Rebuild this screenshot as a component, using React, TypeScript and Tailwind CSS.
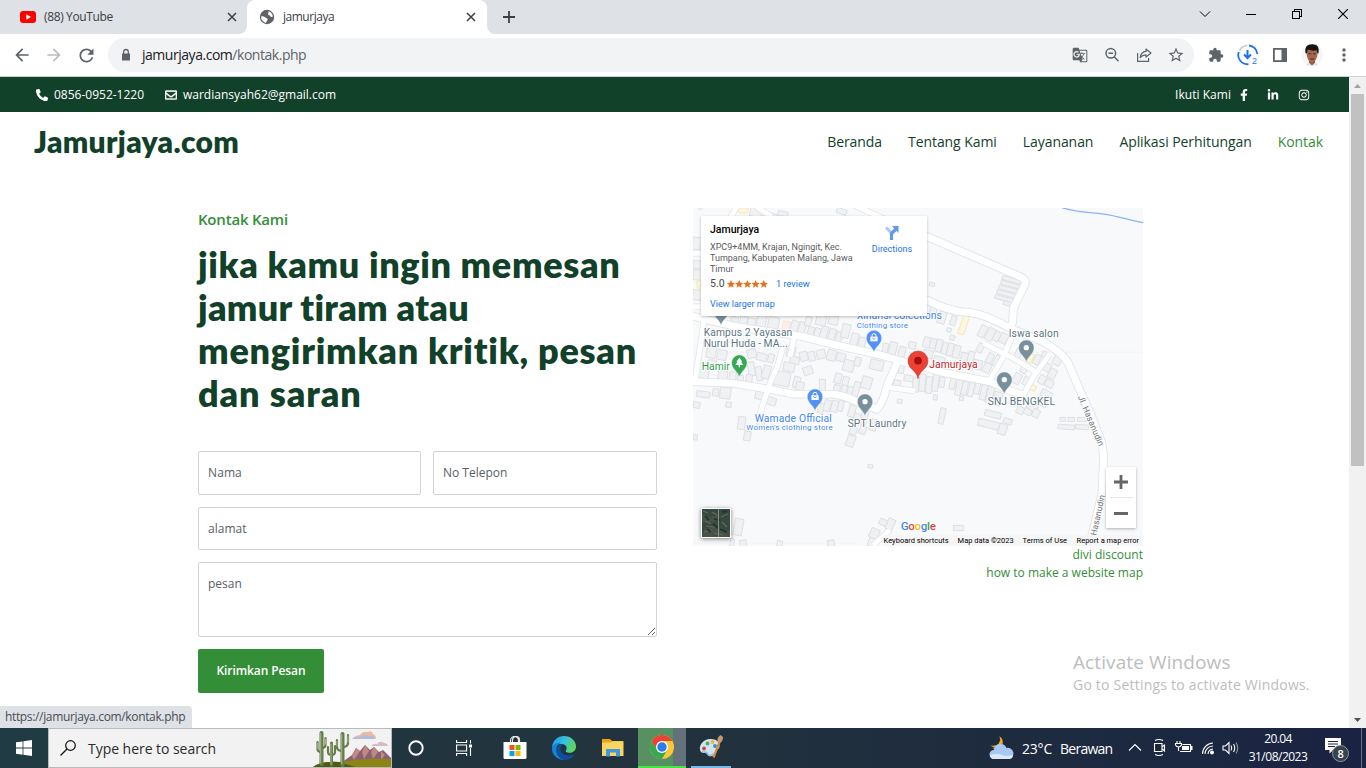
import type { ReactNode } from "react";
import { FaFacebookF, FaInstagram, FaLinkedinIn, FaPhoneAlt, FaRegEnvelope } from "react-icons/fa";
import {
  MdArrowBack,
  MdArrowForward,
  MdExtension,
  MdGTranslate,
  MdMoreVert,
  MdRefresh,
  MdStarBorder,
} from "react-icons/md";

function Cross({ className = "" }: { className?: string }) {
  return (
    <svg viewBox="0 0 10 10" className={`size-[10px] ${className}`} stroke="currentColor" strokeWidth="1.5" fill="none">
      <path d="M1 1l8 8M9 1L1 9" />
    </svg>
  );
}

function TabStrip() {
  return (
    <div className="flex h-[34px] shrink-0 bg-[#dee1e6] text-[12px] text-[#3c4043]">
      <div className="flex w-[247px] items-center pl-5">
        <svg viewBox="0 0 16 12" className="h-[12px] w-[16px]">
          <rect width="16" height="12" rx="3" fill="#f00" />
          <path d="M6.3 3.3v5.4L11 6z" fill="#fff" />
        </svg>
        <span className="ml-2 tracking-[-0.36px]">(88) YouTube</span>
        <Cross className="mr-[10px] ml-auto" />
      </div>
      <div className="relative flex w-[240px] items-center rounded-t-lg bg-white pl-[11px]">
        <svg viewBox="0 0 8 8" className="absolute bottom-0 -left-2 size-2">
          <path d="M8 0v8H0a8 8 0 0 0 8-8z" fill="#fff" />
        </svg>
        <svg viewBox="0 0 8 8" className="absolute -right-2 bottom-0 size-2">
          <path d="M0 0v8h8a8 8 0 0 1-8-8z" fill="#fff" />
        </svg>
        <svg viewBox="0 0 18 18" className="size-[18px]">
          <circle cx="9" cy="9" r="7.200" fill="#5f6368" />
          <path d="M10.500 3.200a6 6 0 0 1 4.300 5.300c-1.200.8-2.300.7-2.600-.5-.3-1-2.200-.6-2.200-2 0-1 .8-1 .5-2.800zM3.200 8.200c2 0 3.600.3 4.300 1.300.6 1 2 .7 2.200 1.700.2 1-1.200 1.300-1.700 3.700a6 6 0 0 1-4.800-6.700z" fill="#fff" />
        </svg>
        <span className="ml-[7px] tracking-[-0.48px]">jamurjaya</span>
        <Cross className="mr-[11px] ml-auto" />
      </div>
      <div className="flex w-11 items-center justify-center">
        <svg viewBox="0 0 12 12" className="size-3" stroke="#3c4043" strokeWidth="1.8">
          <path d="M6 0v12M0 6h12" />
        </svg>
      </div>
      <div className="ml-auto flex h-[28px] items-center text-black">
        <div className="flex w-[46px] justify-center">
          <svg viewBox="0 0 12 8" className="h-2 w-3" fill="none" stroke="currentColor">
            <path d="M1 1.5l5 5 5-5" />
          </svg>
        </div>
        <div className="flex w-[46px] justify-center">
          <div className="h-px w-[10px] bg-black" />
        </div>
        <div className="flex w-[46px] justify-center">
          <svg viewBox="0 0 10 10" className="size-[10px]" fill="none" stroke="currentColor" shapeRendering="crispEdges">
            <path d="M.5 2.5h7v7h-7zM2.5 2.5v-2h7v7h-2" />
          </svg>
        </div>
        <div className="flex w-[46px] justify-center">
          <svg viewBox="0 0 10 10" className="size-[10px]" stroke="currentColor" strokeWidth="1.1">
            <path d="M0 0l10 10M10 0L0 10" />
          </svg>
        </div>
      </div>
    </div>
  );
}

function Cell({ children }: { children: ReactNode }) {
  return <div className="flex w-8 items-center justify-center text-[#5f6368]">{children}</div>;
}

function Toolbar() {
  return (
    <div className="flex h-[43px] shrink-0 items-center border-b border-[#d0d3d6] bg-white pl-[6px]">
      <Cell><MdArrowBack className="size-5" /></Cell>
      <Cell><MdArrowForward className="size-5 text-[#babcbe]" /></Cell>
      <Cell><MdRefresh className="size-[21px]" /></Cell>
      <div className="ml-[6px] flex h-[34px] w-[1086px] items-center rounded-full bg-[#f1f3f4] pl-[11px]">
        <svg viewBox="0 0 14 14" className="size-[14px]">
          <path d="M3 5.500h8v7H3z" fill="#5f6368" />
          <path d="M4.700 6V3.800a2.300 2.300 0 0 1 4.600 0V6" fill="none" stroke="#5f6368" strokeWidth="1.300" />
        </svg>
        <span className="ml-[9px] pb-px text-[14px] tracking-[-0.47px] text-[#202124]">
          jamurjaya.com<span className="text-[#5f6368]">/kontak.php</span>
        </span>
        <div className="mr-[2px] ml-auto flex">
          <Cell><MdGTranslate className="size-4" /></Cell>
          <Cell>
            <svg viewBox="0 0 16 16" className="size-4" fill="none" stroke="currentColor" strokeWidth="1.500">
              <circle cx="6.800" cy="6.300" r="4.800" />
              <path d="M10.200 9.800l4.300 4.400M4.500 6.300h4.600" />
            </svg>
          </Cell>
          <Cell>
            <svg viewBox="0 0 16 16" className="size-4" fill="none" stroke="currentColor" strokeWidth="1.200">
              <path d="M1.600 6v8.400h11V11" />
              <path d="M10 2l5 4-5 4V7.800C7.500 7.700 5.700 8.600 4.200 10.600 4.600 7 6.700 4.700 10 4.400z" strokeLinejoin="round" />
            </svg>
          </Cell>
          <Cell><MdStarBorder className="size-[18px]" /></Cell>
        </div>
      </div>
      <div className="ml-[6px] flex items-center">
        <Cell><MdExtension className="size-4" /></Cell>
        <Cell>
          <svg viewBox="0 0 22 22" className="size-[22px]" fill="none">
            <path d="M2.500 6.500A9.200 9.200 0 0 1 10.500 1.500" stroke="#c6c9cd" strokeWidth="1.700" />
            <path d="M12 1.500A9.200 9.200 0 0 1 20.300 10M1.800 8A9.200 9.200 0 0 0 11.500 20.200" stroke="#1a73e8" strokeWidth="1.800" />
            <path d="M10.500 6v8M7 10.500l3.500 3.500 3.500-3.500" stroke="#1a73e8" strokeWidth="2" />
            <text x="15" y="20" fontSize="9" fill="#1a73e8" fontFamily="Liberation Sans">2</text>
          </svg>
        </Cell>
        <Cell>
          <svg viewBox="0 0 14 14" className="size-[14px]">
            <path d="M0 0h14v14H0z" fill="#5f6368" />
            <path d="M1.800 1.800h6.700v10.400H1.800z" fill="#fff" />
          </svg>
        </Cell>
        <Cell>
          <svg viewBox="0 0 22 22" className="size-[22px]">
            <circle cx="11" cy="11" r="10.800" fill="#f4f7f5" />
            <path d="M4.500 21.500c1-2 3.500-3 6.500-3s5.500 1 6.500 3z" fill="#dfe3e5" />
            <path d="M8 15h6v3.500L11 21.500 8 18.500z" fill="#96593f" />
            <path d="M5.800 7.500Q6 4 11 4t5.400 3.500q.6 5-1.400 8-1.500 3-4 3t-4-3q-1.800-3-1.200-8z" fill="#a5674c" />
            <path d="M4.700 9.500C3.200 3.500 6 .3 11.200.3S18.800 3 17.300 9.800l-1-.5-.6-3C12.500 7 9.500 6.500 6.800 5.500l-1 4z" fill="#171313" />
            <path d="M7.500 9.800h2.700M12 9.800h2.700M9.200 15h3.800" stroke="#4c241c" />
          </svg>
        </Cell>
        <Cell><MdMoreVert className="size-[20px]" /></Cell>
      </div>
    </div>
  );
}

function SiteHeader() {
  return (
    <>
      <div className="flex h-[35px] shrink-0 items-center bg-[#12412a] pr-[39px] pl-9 text-[12px] text-white">
        <FaPhoneAlt className="size-3" />
        <span className="ml-[6px] w-[111px]">0856-0952-1220</span>
        <FaRegEnvelope className="size-3" stroke="currentColor" strokeWidth="18" />
        <span className="ml-[6px]">wardiansyah62@gmail.com</span>
        <span className="ml-auto tracking-[0.03px]">Ikuti Kami</span>
        <FaFacebookF className="ml-[7px] size-3" />
        <FaLinkedinIn className="ml-[17px] size-3" />
        <FaInstagram className="ml-[19px] size-3" />
      </div>
      <div className="flex h-[60px] shrink-0 items-center pr-[26px] pb-[2px] pl-[34px] text-[#12412a]">
        <span className="font-['Lato'] text-[30px] font-extrabold tracking-[0.33px]">Jamurjaya.com</span>
        <nav className="ml-auto flex gap-[26px] text-[14px] tracking-[-0.07px]">
          <span>Beranda</span>
          <span>Tentang Kami</span>
          <span>Layananan</span>
          <span>Aplikasi Perhitungan</span>
          <span className="text-[#348e38]">Kontak</span>
        </nav>
      </div>
    </>
  );
}

function ContactForm() {
  return (
    <div className="w-[459px]">
      <p className="h-[22px] text-[15px] leading-[22px] font-semibold tracking-[-0.2px] text-[#348e38]">Kontak Kami</p>
      <h1 className="mt-[13px] font-['Lato'] text-[36px] leading-[43px] font-extrabold whitespace-nowrap text-[#12412a]">
        <span className="tracking-[0.64px]">jika kamu ingin memesan</span><br />
        <span className="tracking-[0.27px]">jamur tiram atau</span><br />
        <span className="tracking-[0.75px]">mengirimkan kritik, pesan</span><br />
        <span className="tracking-[0.9px]">dan saran</span>
      </h1>
      <form className="mt-9 flex flex-col gap-3 text-[12px] text-[#212529]">
        <div className="flex justify-between">
          <input placeholder="Nama" className="h-[44px] w-[223px] rounded-[2px] border border-[#ced4da] px-[9px] pb-px tracking-[0.1px] placeholder:text-[#596066]" />
          <input placeholder="No Telepon" className="h-[44px] w-[224px] rounded-[2px] border border-[#ced4da] px-[9px] pb-px placeholder:text-[#596066]" />
        </div>
        <input placeholder="alamat" className="h-[43px] rounded-[2px] border border-[#ced4da] px-[9px] tracking-[0.03px] placeholder:text-[#596066]" />
        <textarea placeholder="pesan" className="h-[75px] rounded-[2px] border border-[#ced4da] px-[9px] py-3 leading-[18px] placeholder:text-[#596066]" />
        <button type="button" className="h-[44px] w-[126px] rounded-[2px] bg-[#348e38] font-[550] tracking-[-0.09px] text-white">
          Kirimkan Pesan
        </button>
      </form>
    </div>
  );
}

const roads = [
  "M0 346L60 362L150 382L330 408L450 438L560 462L640 485L760 518L900 545L960 572L1000 585",
  "M680 290L710 300Q780 335 830 337T960 385L1060 425Q1120 460 1135 490L1165 560L1205 650L1232 720Q1242 750 1240 790L1236 880L1200 1030",
  "M0 545L130 550L240 568L310 582L430 583Q470 588 500 605L560 628Q580 610 590 560L625 480",
  "M700 105L990 230Q1012 238 1004 255L970 325L968 365L960 390",
];
const lanes = [
  "M15 545L42 362",
  "M208 645L240 550L262 500L282 430",
  "M900 540L940 470L970 400",
  "M880 430L960 470L1045 520",
  "M1000 585L1030 530L1080 462",
  "M600 563L675 573",
  "M140 20L120 55",
  "M470 5L600 65L690 100",
  "M200 20L245 50",
  "M0 160H40M0 320H40",
  "M550 1035L600 990",
  "M315 400L300 470",
];
/* x, y, width, height, rotation */
const buildings: number[][] = [
  [20, 5, 40, 12, -50], [180, 25, 34, 26, 15], [220, 38, 40, 18, 20], [264, 34, 30, 14, 12], [440, 26, 30, 16, 20], [8, 112, 26, 36, 5], [8, 182, 26, 24, 5], [10, 210, 26, 30, 5], [8, 270, 26, 30, 8],
  [50, 330, 26, 22, 15], [122, 350, 22, 22, 12], [150, 350, 22, 24, 12], [172, 355, 24, 30, 12], [200, 345, 28, 40, 12], [234, 352, 32, 40, 12], [302, 362, 22, 40, 18], [326, 366, 20, 38, 18], [346, 350, 18, 28, 18], [352, 380, 18, 36, 18], [372, 384, 18, 34, 18], [392, 378, 20, 40, 18], [416, 386, 20, 34, 18], [438, 396, 18, 32, 18], [378, 346, 30, 30, 12], [416, 348, 28, 26, 12], [455, 372, 24, 42, 14], [482, 400, 22, 38, 14], [506, 412, 20, 32, 14], [578, 430, 16, 28, 14], [598, 426, 22, 38, 14], [626, 440, 20, 30, 14],
  [50, 440, 28, 34, 12], [82, 450, 28, 30, 12], [172, 448, 26, 26, -12], [200, 460, 30, 22, 15], [234, 462, 18, 26, 15], [174, 486, 20, 42, -10], [198, 500, 18, 42, -10], [218, 496, 22, 40, 15], [290, 440, 26, 30, 12], [300, 470, 28, 22, 12], [280, 488, 34, 26, 12], [252, 515, 48, 42, 10], [310, 530, 20, 34, 15], [330, 455, 22, 28, -14], [355, 455, 20, 28, -14], [380, 450, 26, 26, -14], [412, 450, 26, 32, 14], [440, 460, 26, 24, 14], [460, 480, 32, 34, 15], [494, 472, 18, 26, 15], [540, 480, 40, 30, 14], [340, 500, 28, 24, -20], [318, 546, 24, 24, 12], [388, 538, 18, 34, 0], [434, 520, 20, 30, 15], [458, 530, 18, 28, 15], [430, 555, 20, 26, 15], [454, 556, 16, 28, 15], [472, 560, 18, 30, 15], [490, 545, 18, 44, 15], [515, 530, 30, 36, 15],
  [24, 505, 32, 30, 6], [55, 480, 24, 22, 6], [84, 512, 28, 34, 6], [118, 516, 20, 30, 6], [142, 526, 18, 22, 6], [168, 524, 18, 28, 6],
  [20, 574, 40, 18, 8], [10, 606, 20, 18, 8], [68, 566, 18, 22, 8], [90, 562, 32, 34, 8], [108, 606, 16, 16, 8], [10, 704, 12, 16, 8], [196, 568, 28, 30, 10], [224, 592, 34, 22, 15], [144, 650, 22, 38, 8], [162, 694, 20, 28, 8], [200, 655, 24, 24, 8],
  [384, 610, 18, 30, 15], [402, 600, 20, 34, 15], [424, 602, 20, 34, 15], [444, 602, 16, 32, 15], [476, 615, 20, 36, 15], [490, 640, 20, 34, 15], [512, 634, 20, 40, 15], [540, 658, 20, 34, 15], [470, 706, 24, 34, 20], [480, 680, 20, 24, 20], [508, 678, 20, 24, 20],
  [610, 540, 22, 20, 8], [626, 492, 16, 28, 8], [642, 526, 28, 18, 8], [622, 598, 14, 12, 8], [668, 532, 18, 44, 5], [688, 522, 18, 52, 5], [708, 530, 18, 50, 5], [728, 520, 18, 54, 8], [748, 532, 16, 30, 8], [730, 584, 12, 16, 8], [780, 528, 16, 40, 12], [798, 536, 18, 50, 12], [816, 544, 16, 42, 12], [836, 546, 16, 44, 14], [854, 544, 16, 38, 14], [872, 552, 18, 48, 14], [890, 560, 20, 48, 14], [910, 576, 24, 40, 20], [808, 590, 12, 12, 10],
  [656, 426, 22, 20, 8], [700, 412, 22, 30, 14], [720, 416, 18, 30, 14], [738, 418, 18, 38, 14], [756, 428, 16, 34, 14], [772, 430, 18, 38, 14], [790, 436, 20, 38, 14], [812, 458, 22, 30, 14], [834, 454, 18, 34, 14], [848, 480, 28, 28, 14], [700, 450, 28, 24, 14], [730, 470, 34, 28, 14], [720, 320, 20, 24, 14], [745, 335, 22, 36, 18], [782, 348, 16, 28, 18], [770, 384, 14, 12, 18], [780, 406, 14, 14, 18], [868, 376, 20, 36, 28], [890, 384, 22, 38, 28], [912, 394, 18, 30, 28], [930, 400, 22, 30, 28], [862, 430, 18, 28, 28], [890, 460, 18, 34, 28], [912, 466, 18, 34, 28], [880, 490, 22, 28, 28], [718, 248, 16, 10, 15],
  [936, 234, 60, 12, 15], [932, 248, 60, 12, 15], [926, 262, 60, 12, 15], [920, 276, 60, 12, 15], [914, 290, 56, 12, 15], [940, 306, 34, 12, 15],
  [976, 446, 18, 28, 28], [994, 492, 18, 28, 28], [970, 520, 22, 32, 28], [1000, 530, 16, 26, 28], [1056, 454, 16, 18, 28], [1032, 464, 18, 30, 28], [1060, 490, 22, 24, 28], [1090, 466, 24, 30, 28], [1076, 506, 22, 30, 28], [1046, 526, 20, 26, 28], [1066, 540, 24, 22, 28], [1052, 572, 34, 22, 28], [1040, 596, 32, 22, 28], [1010, 610, 32, 26, 28], [970, 590, 22, 26, 28], [980, 620, 22, 22, 28], [1002, 626, 22, 18, 28], [1028, 628, 20, 24, 28],
  [748, 624, 16, 48, 12], [884, 634, 50, 18, 14], [864, 662, 66, 22, 14], [926, 672, 24, 32, 18], [940, 656, 26, 16, 18], [1110, 652, 16, 12, 0], [1134, 652, 20, 12, 0], [1162, 652, 28, 12, 0], [1104, 674, 50, 14, 4], [1156, 674, 40, 14, 4],
  [534, 794, 14, 10, 6], [790, 976, 30, 16, 0], [132, 956, 26, 50, 10], [120, 1016, 12, 30, 10], [150, 1020, 20, 24, -10], [260, 1022, 16, 30, 10], [414, 1020, 20, 30, -10], [568, 958, 24, 18, 25], [590, 956, 22, 34, 25], [540, 986, 26, 30, 25], [535, 1014, 22, 26, 20],
];

function Pin({ x, y, fill, icon }: { x: number; y: number; fill: string; icon?: "bag" | "tree" }) {
  return (
    <g transform={`translate(${x} ${y})`}>
      <path d="M0 66C-3 50-23 42-23 23a23 23 0 0 1 46 0C23 42 3 50 0 66z" fill={fill} stroke="#fff" strokeOpacity=".6" strokeWidth="1.500" />
      {icon === "bag" ? (
        <>
          <path d="M-11 19h22v14h-22z" fill="#fff" />
          <path d="M-6 21v-5a6 6 0 0 1 12 0v5" fill="none" stroke="#fff" strokeWidth="3" />
          <path d="M-5 23q5 7 10 0" fill="none" stroke={fill} strokeWidth="2.500" />
        </>
      ) : icon === "tree" ? (
        <path d="M0 8L9 20H5l7 10H2v7h-4v-7h-10l7-10h-4z" fill="#fff" />
      ) : (
        <circle cy="23" r="8" fill="#fff" />
      )}
    </g>
  );
}

function Label({ x, y, w, size = 31, fill = "#5d7582", children }: { x: number; y: number; w: number; size?: number; fill?: string; children: string }) {
  return (
    <text x={x} y={y} textLength={w} fontSize={size} fill={fill} stroke="#fff" strokeWidth="5" strokeLinejoin="round" paintOrder="stroke" fontWeight="400">
      {children}
    </text>
  );
}

function MapDrawing() {
  return (
    <svg viewBox="9 24 1350 1014" className="absolute inset-0 h-[338px] w-[450px] font-['Roboto']">
      <rect x="9" y="24" width="1350" height="1014" fill="#f8f9fa" />
      <path d="M9 457H1359M9 1030H500" stroke="#f1f2f5" strokeWidth="2" />
      <g fill="#eff1f3" stroke="#dadde1" strokeWidth="2.500">
        {buildings.map(([x, y, w, h, r], i) => (
          <rect key={i} x={x} y={y} width={w} height={h} transform={`rotate(${r} ${x + w / 2} ${y + h / 2})`} />
        ))}
      </g>
      <g fill="#fdf6e0" stroke="#f7e3a9" strokeWidth="2.500">
        <path d="M822 343L839 348L821 404L803 400z" />
        <path d="M1018 550L1040 560L1034 574L1012 566z" />
        <path d="M1018 458L1034 465L1022 490L1008 484z" />
        <path d="M144 24H176L170 40L142 36zM20 244L32 240V268L22 266zM378 606L396 602L384 636z" />
        <path d="M280 362L302 366L296 392L276 388z" fill="#fbeee4" stroke="#f6e3d6" />
      </g>
      <g fill="none" strokeLinejoin="round">
        <g stroke="#dfe2e6">
          {lanes.map((d) => <path key={d} d={d} strokeWidth="19" />)}
          {roads.map((d) => <path key={d} d={d} strokeWidth="26" />)}
        </g>
        <g stroke="#fff">
          {lanes.map((d) => <path key={d} d={d} strokeWidth="15" />)}
          {roads.map((d) => <path key={d} d={d} strokeWidth="21" />)}
        </g>
      </g>
      <path d="M1116 23Q1150 34 1200 38T1290 52T1359 68" fill="none" stroke="#8ab4f8" strokeWidth="4" />
      <Pin x={93} y={310} fill="#78909c" />
      <Pin x={148} y={465} fill="#34a853" icon="tree" />
      <Pin x={552} y={391} fill="#5491f5" icon="bag" />
      <Pin x={375} y={567} fill="#5491f5" icon="bag" />
      <Pin x={525} y={582} fill="#78909c" />
      <Pin x={943} y={516} fill="#78909c" />
      <Pin x={1009} y={420} fill="#78909c" />
      <path d="M684 536C680 511 654 507 654 483a30 30 0 0 1 60 0C714 507 688 511 684 536z" fill="#ea4335" stroke="#c5221f" strokeWidth="1.500" />
      <circle cx="684" cy="482" r="11.500" fill="#a50e0e" />
      <Label x={41} y={409} w={266}>Kampus 2 Yayasan</Label>
      <Label x={41} y={441} w={252}>Nurul Huda - MA...</Label>
      <Label x={35} y={510} w={84} size={31} fill="#2e9b4c">Hamir</Label>
      <Label x={500} y={358} w={256} size={32} fill="#4285f4">Xinansi colections</Label>
      <Label x={500} y={384} w={154} size={24} fill="#4285f4">Clothing store</Label>
      <Label x={718} y={503} w={145} size={31} fill="#c5221f">Jamurjaya</Label>
      <Label x={956} y={411} w={150}>Iswa salon</Label>
      <Label x={893} y={614} w={202}>SNJ BENGKEL</Label>
      <Label x={194} y={665} w={231} size={31} fill="#4285f4">Wamade Official</Label>
      <Label x={169} y={691} w={259} size={24} fill="#4285f4">Women's clothing store</Label>
      <Label x={473} y={681} w={176}>SPT Laundry</Label>
      <g transform="translate(1163 591) rotate(67)"><Label x={0} y={0} w={162} size={26} fill="#6a7075">Jl. Hasanudin</Label></g>
      <g transform="translate(1219 1008) rotate(-78)"><Label x={0} y={0} w={124} size={26} fill="#6a7075">Hasanudin</Label></g>
      <text x="632" y="989" fontSize="35" textLength="106" fontWeight="500" stroke="#fff" strokeWidth="4" paintOrder="stroke">
        <tspan fill="#4285f4">G</tspan><tspan fill="#ea4335">o</tspan><tspan fill="#fbbc04">o</tspan><tspan fill="#4285f4">g</tspan><tspan fill="#34a853">l</tspan><tspan fill="#ea4335">e</tspan>
      </text>
    </svg>
  );
}

function MapPanel() {
  return (
    <div className="w-[450px]">
      <div className="relative h-[338px] overflow-hidden font-['Roboto']">
        <MapDrawing />
        <div className="absolute top-2 left-2 flex h-[100px] w-[226px] rounded-[1px] bg-white pt-[7px] pl-[9px] text-[9px] shadow-[0_1px_3px_rgba(0,0,0,0.25)]">
          <div className="w-[151px] whitespace-nowrap">
            <div className="text-[10.5px] leading-[14px] font-medium text-black">Jamurjaya</div>
            <div className="mt-[5px] leading-[11px] text-[#5b5b5b]">
              XPC9+4MM, Krajan, Ngingit, Kec.<br />Tumpang, Kabupaten Malang, Jawa<br />Timur
            </div>
            <div className="mt-[2px] flex h-[14px] items-center">
              <span className="w-[17px] text-[10.5px] text-[#4a4a4a]">5.0</span>
              <svg viewBox="0 0 41 8" className="h-2 w-[41px]" fill="#e7711b">
                {[0, 1, 2, 3, 4].map((i) => (
                  <path key={i} transform={`translate(${i * 8.2} 0)`} d="M4 0l1.200 2.800 2.900.2-2.200 1.900.7 2.900L4 6.200 1.400 7.800l.7-2.900L-.1 3l2.900-.2z" />
                ))}
              </svg>
              <span className="ml-2 text-[9.2px] text-[#1a73e8]">1 review</span>
            </div>
            <div className="mt-[6px] text-[9px] leading-[14px] text-[#1a73e8]">View larger map</div>
          </div>
          <div className="flex w-[62px] flex-col items-center pt-[2px]">
            <svg viewBox="0 0 14 15" className="h-[15px] w-[14px]" fill="none">
              <path d="M1 2.500L7 8.500" stroke="#a8c7fa" strokeWidth="3" />
              <path d="M6.500 15V8.500L12 3" stroke="#5f9bea" strokeWidth="3.200" />
              <path d="M7 1h6.500v7z" fill="#5f9bea" />
            </svg>
            <span className="mt-[2px] text-[9px] leading-[14px] text-[#1a73e8]">Directions</span>
          </div>
        </div>
        <div className="absolute bottom-2 left-2 size-[30px] border border-white shadow-[0_1px_4px_rgba(0,0,0,0.5)]">
          <svg viewBox="0 0 28 28" className="size-7">
            <path d="M0 0h28v28H0z" fill="#344a41" />
            <path d="M0 5l8 3 8-2v6l-8 2-8-1zM2 20l12-3 14 5v6H0z" fill="#485146" />
            <path d="M1 2l5 2M10 3l5 3M19 8l7-3M3 12l6 3M20 13l5 5M2 23l8-2M12 24l9 2M4 17l9 1" stroke="#6c6556" strokeWidth="1.200" />
            <path d="M3 7l4 4M12 10l6 1M20 3l5-1M5 20l4 3M18 20l7 3M11 15l5 4" stroke="#20382f" strokeWidth="2" />
            <path d="M16.500 0v28" stroke="#8a8d82" />
          </svg>
        </div>
        <div className="absolute right-[7px] bottom-[18px] flex h-[61px] w-[30px] flex-col items-center rounded-[1px] bg-white shadow-[0_1px_3px_rgba(0,0,0,0.3)]">
          <div className="flex h-[30px] items-center">
            <svg viewBox="0 0 14 14" className="size-[14px]" stroke="#666" strokeWidth="2.800"><path d="M7 0v14M0 7h14" /></svg>
          </div>
          <div className="h-px w-[23px] bg-[#e6e6e6]" />
          <div className="flex h-[30px] items-center">
            <div className="h-[3px] w-[14px] bg-[#666]" />
          </div>
        </div>
        <div className="absolute right-0 bottom-0 flex h-[11px] items-center bg-[#f5f5f5]/80 pr-1 text-[7.5px] whitespace-nowrap text-black">
          <span className="w-[74px]">Keyboard shortcuts</span>
          <span className="w-[65px]">Map data ©2023</span>
          <span className="w-[54px]">Terms of Use</span>
          <span className="tracking-[-0.01px]">Report a map error</span>
        </div>
      </div>
      <div className="text-right text-[12px] leading-[18px] text-[#348e38]">
        <div>divi discount</div>
        <div>how to make a website map</div>
      </div>
    </div>
  );
}

function Scrollbar() {
  return (
    <div className="flex w-[17px] shrink-0 flex-col items-center bg-[#f1f1f1]">
      <svg viewBox="0 0 17 17" className="size-[17px]"><path d="M5 11h7L8.500 7z" fill="#a3a3a3" /></svg>
      <div className="h-[372px] w-[13px] bg-[#c1c1c1]" />
      <svg viewBox="0 0 17 17" className="mt-auto size-[17px]"><path d="M5 7h7l-3.500 4z" fill="#505050" /></svg>
    </div>
  );
}

function DesertArt() {
  return (
    <svg viewBox="0 0 78 38" className="h-[38px] w-[78px]">
      <path d="M40 9q3-3 7-3 3-4 8-3 4-2 5 2 3 1 3 4z" fill="#e9bba5" />
      <path d="M39 10q3-3 8-2 5-3 9-1 4-1 7 3z" fill="#b3b9d6" />
      <path d="M58 17q3-3 6-2 3-4 7-1 3 0 4 3z" fill="#d5b9c4" />
      <path d="M28 34l11-8 4-7 4 3 5-6 5 5 4-3 5 5 4-2 8 8v7z" fill="#8a6076" />
      <path d="M43 19l4 3-6 9-2-4zM52 16l4 6-5 8-2-7zM61 18l4 5-5 7-2-7zM68 22l4 4-4 5z" fill="#c18a80" />
      <path d="M0 38q8-6 26-5 26-5 52-3v8z" fill="#8c8414" />
      <path d="M0 38q8-6 26-5l16 5z" fill="#4d5c14" />
      <g fill="none" strokeLinecap="round">
        <g stroke="#647c4a">
          <path d="M8.500 35V4M29.500 36V5" strokeWidth="4" />
          <path d="M18.500 36V14" strokeWidth="3" />
          <path d="M4.500 13v7q0 3 4 3M12.500 9v7q0 3-4 3M22 17v6q0 3-3.500 3M15 18v5q0 3 3.500 3M24 11v7q0 4 5.500 4M35 6v8q0 4-5.500 4" strokeWidth="2.200" />
        </g>
        <path d="M7.700 34V4.500M28.700 35V5.500M18 35V15M24 12v5M35 7v6M4.200 14v5M12.500 10v5" stroke="#a9b589" strokeWidth="1.100" />
      </g>
    </svg>
  );
}

function Taskbar() {
  return (
    <div className="flex h-10 shrink-0 items-center bg-linear-to-r from-[#203b43] via-[#22323c] to-[#1a2342] text-white">
      <div className="flex w-12 justify-center">
        <svg viewBox="0 0 16 16" className="size-4" fill="#fff">
          <path d="M0 2.300L6.600 1.400v6.200H0zM7.400 1.300L16 0v7.600H7.400zM0 8.400h6.600v6.300L0 13.700zM7.400 8.400H16V16l-8.600-1.200z" />
        </svg>
      </div>
      <div className="flex h-10 w-[344px] items-center border border-[#b8babb] bg-[#f2f2f2] pl-[11px]">
        <svg viewBox="0 0 16 16" className="size-4" fill="none" stroke="#111" strokeWidth="1.200">
          <circle cx="10.500" cy="5.500" r="4.800" />
          <path d="M7 9L.5 15.500" />
        </svg>
        <span className="ml-3 text-[14px] tracking-[-0.04px] text-[#2b2b2b]">Type here to search</span>
        <div className="ml-auto"><DesertArt /></div>
      </div>
      <div className="flex h-10">
        <div className="flex w-12 items-center justify-center">
          <svg viewBox="0 0 16 16" className="size-4" fill="none" stroke="#fff" strokeWidth="1.900"><circle cx="8" cy="8" r="6.700" /></svg>
        </div>
        <div className="flex w-12 items-center justify-center">
          <svg viewBox="0 0 16 16" className="size-4" fill="none" stroke="#fff" strokeWidth="1.100">
            <path d="M.6 0v2.500h10V0M.6 5h10v6H.6zM.6 16v-2.500h10V16M14.500 0v3.500M14.500 8v8" />
            <path d="M13 4.500h3v3h-3z" fill="#fff" stroke="none" />
          </svg>
        </div>
        <div className="flex w-[53px] items-center justify-center">
          <svg viewBox="0 0 24 24" className="size-6">
            <path d="M7.500 6V4.500a3.500 3.500 0 0 1 8 0V6M9.500 6V4a3.500 3.500 0 0 1 7 0v2" fill="none" stroke="#e8e8e8" strokeWidth="1.200" />
            <path d="M.5 6h23v15.500a1.500 1.500 0 0 1-1.500 1.500H2a1.500 1.500 0 0 1-1.500-1.500z" fill="#fff" />
            <path d="M6.500 9h5v5h-5z" fill="#f25022" /><path d="M12.500 9h5v5h-5z" fill="#7fba00" />
            <path d="M6.500 15h5v5h-5z" fill="#00a4ef" /><path d="M12.500 15h5v5h-5z" fill="#ffb900" />
          </svg>
        </div>
        <div className="flex w-[46px] items-center justify-center">
          <svg viewBox="0 0 24 24" className="size-6">
            <defs>
              <linearGradient id="edgeTop" x1="0" y1=".2" x2="1" y2=".5"><stop stopColor="#1d9be8" /><stop offset=".5" stopColor="#35c1df" /><stop offset="1" stopColor="#5fd859" /></linearGradient>
            </defs>
            <path d="M0 11.500C.5 4.500 5.500 0 12 0c7 0 12 5 12 10.500 0 4-3 6.300-6.500 6.300-3 0-4.500-1-3.500-2.500 2-3-.5-6.300-4.500-6.300C5 8 1 9 0 11.500z" fill="url(#edgeTop)" />
            <path d="M0 12c1-4 5-5.500 9-5.300-3.500 1.500-5 4.500-4.500 8C5 19.500 9 23.500 13.500 23.900 5.500 24.700-.3 19 0 12z" fill="#1284d8" />
            <path d="M9.500 8C6 9.500 4 12 4.500 15.500 5.300 20.500 9.500 24 14 24c3.800-.4 6.800-2.500 8.500-5.700-6 3-14 .5-14-5.300 0-2 .7-3.700 2.500-4.700z" fill="#0d4f9e" />
          </svg>
        </div>
        <div className="flex w-[51px] items-center justify-center">
          <svg viewBox="0 0 22 18" className="h-[18px] w-[22px]">
            <path d="M0 0h8l2 2h11v4H0z" fill="#e6a416" />
            <path d="M0 3.500h9l1.500-1.300H21.500V17H0z" fill="#fcd462" />
            <path d="M4 17.500V10h14v7.500h-4v-4H8v4z" fill="#3f99dc" />
          </svg>
        </div>
        <div className="flex w-12 items-center justify-center border-b-2 border-[#49e342] bg-linear-to-r from-[#579061] from-73% to-[#63717b] to-73%">
          <svg viewBox="0 0 24 24" className="size-6">
            <circle cx="12" cy="12" r="12" fill="#fcc934" />
            <path d="M1.600 6A12 12 0 0 1 22.400 6H12L6.800 15z" fill="#ea4335" />
            <path d="M1.600 6A12 12 0 0 0 12 24l5.200-9L12 12l-5.200 3z" fill="#34a853" />
            <circle cx="12" cy="12" r="6" fill="#fff" /><circle cx="12" cy="12" r="4.700" fill="#2b7de9" />
          </svg>
        </div>
        <div className="mx-[5px] flex w-10 items-center justify-center border-b-2 border-[#76b9ed]">
          <svg viewBox="0 0 24 24" className="size-6">
            <path d="M1 15C0 9 5 4.500 11 4c6-.3 10 3 9.500 7.500-.3 3-3 2.500-4 4.500-1 2.500-1 5-5 5.200-2 0-2-2-3.500-2.700C5.500 17.500 2 19 1 15z" fill="#cfe5f3" />
            <path d="M3 17c2 .5 5-1 6 2.500 1 1.500 4 1.500 5-1" fill="none" stroke="#93bfdd" strokeWidth="1.500" />
            <circle cx="5" cy="13.500" r="1.900" fill="#d6433a" /><circle cx="8.500" cy="8.500" r="1.900" fill="#4eb04d" />
            <circle cx="13.500" cy="7" r="1.900" fill="#edb92e" /><circle cx="16" cy="11" r="1.900" fill="#3f88cf" />
            <path d="M20.500 7L14.500 22.500" stroke="#d98a38" strokeWidth="2.200" />
            <path d="M18.500 7q-1-4 3-7l2.500 2q0 4-3 6z" fill="#c49873" />
          </svg>
        </div>
      </div>
      <div className="ml-auto flex h-10 items-center">
        <svg viewBox="0 0 25 24" className="h-6 w-[25px]">
          <path d="M10.500 0q6 5 1 13H3L6 12 1 9.500q7 1 9-2.500T10.500 0z" fill="#f5a829" />
          <path d="M5 23a4.500 4.500 0 0 1 0-9A6.500 6.500 0 0 1 17.500 12 5.500 5.500 0 0 1 20 23z" fill="#a9c9f5" />
          <path d="M4 23h16a4 4 0 0 0 4-4q-7 2-11 0t-12 0q0 3 3 4z" fill="#dce9fb" />
        </svg>
        <span className="ml-2 w-[38px] text-[14px] tracking-[-0.2px]">23°C</span>
        <span className="w-[68px] text-[14px] tracking-[-0.75px]">Berawan</span>
        <svg viewBox="0 0 118 24" className="h-6 w-[118px]" fill="none" stroke="#fff" strokeWidth="1.100">
          <path d="M1 14.500l6-6 6 6" />
          <path d="M27 4.500q4-2 8 0M27 18.500q4 2 8 0M26.500 7.500h7.500v8h-7.500zM34.500 10.500l2-1.500v6L34.500 13" />
          <path d="M54.500 8.500h8v7H52" />
          <path d="M54 10h7v4h-7zM63 10h1.500v4H63z" fill="#fff" stroke="none" />
          <path d="M49 5v2M52 5v2M47.500 7.500h6v1.500q-1 2-3 2t-3-2zM50.500 11v4" />
          <path d="M74.500 18A11 11 0 0 1 85 7M77 18a8 8 0 0 1 8-8M80 18a5.500 5.500 0 0 1 5-5" />
          <circle cx="84" cy="16.500" r="1.400" fill="#fff" />
          <path d="M95 10h2.500L101 6.500v11L97.500 14H95zM103 9.500q1.500 2.500 0 5M105.500 8q2.500 4 0 8" />
          <path d="M108 6.500q3.500 5.500 0 11" stroke="#8d97a5" />
        </svg>
        <div className="flex w-[64px] flex-col items-center text-[12px] leading-[18px]">
          <span className="tracking-[-0.6px]">20.04</span>
          <span className="tracking-[-0.5px]">31/08/2023</span>
        </div>
        <svg viewBox="0 0 26 26" className="mt-1 ml-[14px] size-[26px]">
          <path d="M1 1h16v12H9l-3.500 3.500V13H1z" fill="#fff" />
          <path d="M4 4.500h10M4 7h10M4 9.500h7" stroke="#1c2742" />
          <circle cx="16.500" cy="16.500" r="8" fill="#39424c" stroke="#8b949c" />
          <text x="13.500" y="20.500" fontSize="11" fontFamily="Open Sans" fontWeight="600" fill="#fff">8</text>
        </svg>
        <div className="mr-1 ml-[11px] h-10 w-px bg-[#6a7282]" />
      </div>
    </div>
  );
}

export default function App() {
  return (
    <div className="flex h-[768px] w-[1366px] flex-col overflow-hidden bg-white font-['Open_Sans',sans-serif]">
      <TabStrip />
      <Toolbar />
      <div className="relative flex h-[651px] shrink-0">
        <div className="flex min-w-0 flex-1 flex-col">
          <SiteHeader />
          <main className="flex gap-9 pt-9 pl-[198px]">
            <ContactForm />
            <MapPanel />
          </main>
        </div>
        <Scrollbar />
        <div className="absolute bottom-0 left-0 flex h-[22px] w-[192px] items-center rounded-tr-[4px] bg-[#dee1e6] pl-[5px] text-[12px] tracking-[-0.35px] text-[#4a4d51]">
          https://jamurjaya.com/kontak.php
        </div>
        <div className="absolute right-[50px] bottom-[34px] w-[243px] text-[#bdbdbd]">
          <div className="text-[19px] leading-[26px] tracking-[0.1px]">Activate Windows</div>
          <div className="text-[14px] leading-[19px] tracking-[0.21px]">Go to Settings to activate Windows.</div>
        </div>
      </div>
      <Taskbar />
    </div>
  );
}
